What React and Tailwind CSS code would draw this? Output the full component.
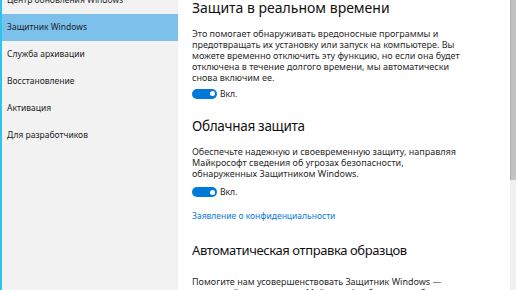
export default function App() {
  const font = { fontFamily: '"Noto Sans", "Open Sans", sans-serif' };
  const items = [
    "Центр обновления Windows",
    "Защитник Windows",
    "Служба архивации",
    "Восстановление",
    "Активация",
    "Для разработчиков",
  ];
  const Toggle = ({ className }) => (
    <div className={"flex items-center gap-[3px] " + className}>
      <div className="w-[25px] h-[10px] rounded-full bg-[#0078d7] flex items-center justify-end pr-[2.5px]">
        <div className="w-[5px] h-[5px] rounded-full bg-white" />
      </div>
      <span className="text-[8.5px] leading-[10px] text-[#222]">Вкл.</span>
    </div>
  );
  const P = ({ className, lines }) => (
    <p className={"text-[9px] leading-[11px] text-[#2a2a2a] whitespace-nowrap " + className}>
      {lines.map((l, i) => (
        <span key={i} className="block">{l}</span>
      ))}
    </p>
  );
  return (
    <div className="w-[516px] h-[290px] flex overflow-hidden bg-white" style={font}>
      <div className="w-[178px] h-full bg-[#f2f2f2] border-l-2 border-[#2bc5ef] flex flex-col">
        <div className="-mt-[13px] flex flex-col">
          {items.map((t, i) => (
            <div
              key={t}
              className={
                "h-[27px] flex items-center pl-[5px] text-[8.5px] text-[#1e1e1e] " +
                (i === 1 ? "bg-[#7cc0ec]" : "")
              }
            >
              {t}
            </div>
          ))}
        </div>
      </div>
      <div className="flex-1 h-full pl-[14px] flex flex-col text-[#1a1a1a]">
        <div className="-mt-[2px] text-[14px] leading-[20px] text-[#111] whitespace-nowrap">Защита в реальном времени</div>
        <P
          className="mt-[9.5px]"
          lines={[
            "Это помогает обнаруживать вредоносные программы и",
            "предотвращать их установку или запуск на компьютере. Вы",
            "можете временно отключить эту функцию, но если она будет",
            "отключена в течение долгого времени, мы автоматически",
            "снова включим ее.",
          ]}
        />
        <Toggle className="mt-[6px]" />
        <div className="mt-[17.5px] text-[13.5px] tracking-[-0.3px] leading-[20px] text-[#111] whitespace-nowrap">Облачная защита</div>
        <P
          className="mt-[9.5px]"
          lines={[
            "Обеспечьте надежную и своевременную защиту, направляя",
            "Майкрософт сведения об угрозах безопасности,",
            "обнаруженных Защитником Windows.",
          ]}
        />
        <Toggle className="mt-[8.5px]" />
        <div className="mt-[12.5px] text-[8.5px] leading-[11px] text-[#0a7ad8] whitespace-nowrap">Заявление о конфиденциальности</div>
        <div className="mt-[19.5px] text-[13px] tracking-[-0.4px] leading-[20px] text-[#111] whitespace-nowrap">Автоматическая отправка образцов</div>
        <P
          className="mt-[16px]"
          lines={[
            "Помогите нам усовершенствовать Защитник Windows —",
            "отправляйте корпорации Майкрософт образцы, чтобы мы",
            "могли улучшить меры защиты.",
          ]}
        />
      </div>
      <div className="w-[6px] h-full flex flex-col bg-[#f0f0f0]">
        <div className="h-[180px] bg-[#c2c2c2] border-l border-[#b0b0b0]" />
      </div>
    </div>
  );
}
